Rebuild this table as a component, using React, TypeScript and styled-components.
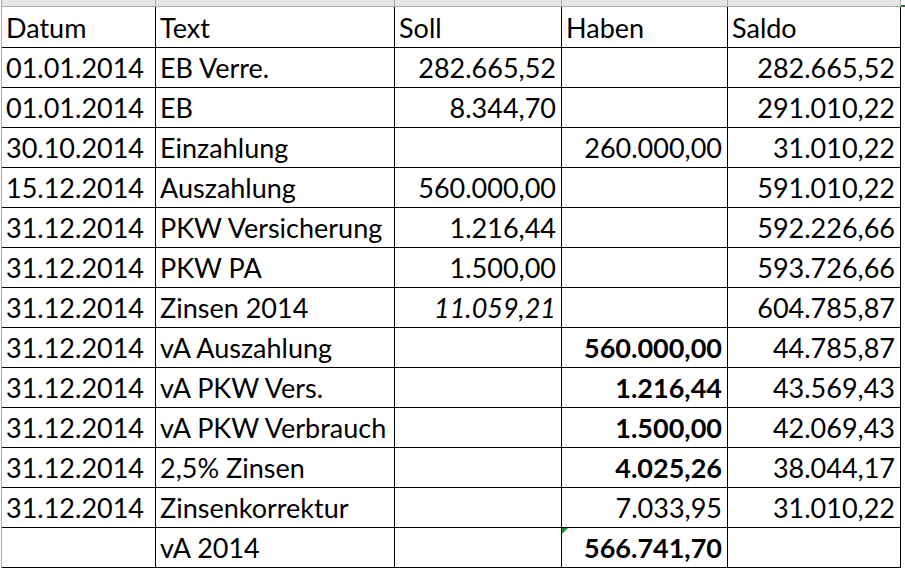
import React from 'react';
import styled, { createGlobalStyle } from 'styled-components';

const GlobalStyle = createGlobalStyle`
  html, body {
    margin: 0;
    padding: 0;
    background: #ffffff;
    overflow: hidden;
  }
`;

type Align = 'left' | 'right';

interface Entry {
  date: string;
  text: string;
  soll?: string;
  haben?: string;
  saldo?: string;
  sollItalic?: boolean;
  habenBold?: boolean;
  flagged?: boolean;
}

const COLUMNS = '154px 239px 167px 166px 173px 1fr';

const ENTRIES: Entry[] = [
  { date: '01.01.2014', text: 'EB Verre.', soll: '282.665,52', saldo: '282.665,52' },
  { date: '01.01.2014', text: 'EB', soll: '8.344,70', saldo: '291.010,22' },
  { date: '30.10.2014', text: 'Einzahlung', haben: '260.000,00', saldo: '31.010,22' },
  { date: '15.12.2014', text: 'Auszahlung', soll: '560.000,00', saldo: '591.010,22' },
  { date: '31.12.2014', text: 'PKW Versicherung', soll: '1.216,44', saldo: '592.226,66' },
  { date: '31.12.2014', text: 'PKW PA', soll: '1.500,00', saldo: '593.726,66' },
  { date: '31.12.2014', text: 'Zinsen 2014', soll: '11.059,21', sollItalic: true, saldo: '604.785,87' },
  { date: '31.12.2014', text: 'vA Auszahlung', haben: '560.000,00', habenBold: true, saldo: '44.785,87' },
  { date: '31.12.2014', text: 'vA PKW Vers.', haben: '1.216,44', habenBold: true, saldo: '43.569,43' },
  { date: '31.12.2014', text: 'vA PKW Verbrauch', haben: '1.500,00', habenBold: true, saldo: '42.069,43' },
  { date: '31.12.2014', text: '2,5% Zinsen', haben: '4.025,26', habenBold: true, saldo: '38.044,17' },
  { date: '31.12.2014', text: 'Zinsenkorrektur', haben: '7.033,95', saldo: '31.010,22' },
  { date: '', text: 'vA 2014', haben: '566.741,70', habenBold: true, flagged: true }
];

const Page = styled.div`
  width: 905px;
  height: 570px;
  overflow: hidden;
  padding-left: 1px;
  box-sizing: border-box;
`;

const Sheet = styled.div`
  border-left: 1px solid #ababab;
  display: grid;
  grid-template-columns: ${COLUMNS};
`;

const ColumnHead = styled.div<{ $selected?: boolean }>`
  height: 7px;
  box-sizing: border-box;
  background: ${({ $selected }) => ($selected ? '#ffffff' : '#e6e6e6')};
  border-right: ${({ $selected }) => ($selected ? 'none' : '1px solid #ababab')};
  border-bottom: ${({ $selected }) => ($selected ? '2px solid #217346' : '1px solid #ababab')};
`;

const Cell = styled.div<{ $align?: Align; $bold?: boolean; $italic?: boolean; $head?: boolean }>`
  position: relative;
  height: ${({ $head }) => ($head ? '41px' : '40px')};
  box-sizing: border-box;
  border-right: 1px solid #000000;
  border-bottom: 1px solid #000000;
  padding: 0 5px 6px 4px;
  display: flex;
  align-items: flex-end;
  justify-content: ${({ $align }) => ($align === 'right' ? 'flex-end' : 'flex-start')};
  font-family: Lato, 'Open Sans', sans-serif;
  font-size: 27px;
  line-height: 27px;
  font-weight: ${({ $bold }) => ($bold ? 700 : 400)};
  font-style: ${({ $italic }) => ($italic ? 'italic' : 'normal')};
  color: #000000;
  white-space: nowrap;
`;

const Spare = styled.div`
  height: 40px;
`;

const ErrorMark = styled.span`
  position: absolute;
  top: 0;
  left: 0;
  width: 0;
  height: 0;
  border-top: 6px solid #1e8a2e;
  border-right: 6px solid transparent;
`;

const App: React.FC = () => {
  return (
    <Page>
      <GlobalStyle />
      <Sheet>
        <ColumnHead />
        <ColumnHead />
        <ColumnHead />
        <ColumnHead />
        <ColumnHead />
        <ColumnHead $selected />

        <Cell $head>Datum</Cell>
        <Cell $head>Text</Cell>
        <Cell $head>Soll</Cell>
        <Cell $head>Haben</Cell>
        <Cell $head>Saldo</Cell>
        <Spare />

        {ENTRIES.map((entry, index) => (
          <React.Fragment key={index}>
            <Cell>{entry.date}</Cell>
            <Cell>{entry.text}</Cell>
            <Cell $align='right' $italic={entry.sollItalic}>{entry.soll}</Cell>
            <Cell $align='right' $bold={entry.habenBold}>
              {entry.flagged && <ErrorMark />}
              {entry.haben}
            </Cell>
            <Cell $align='right'>{entry.saldo}</Cell>
            <Spare />
          </React.Fragment>
        ))}
      </Sheet>
    </Page>
  );
};

export default App;
